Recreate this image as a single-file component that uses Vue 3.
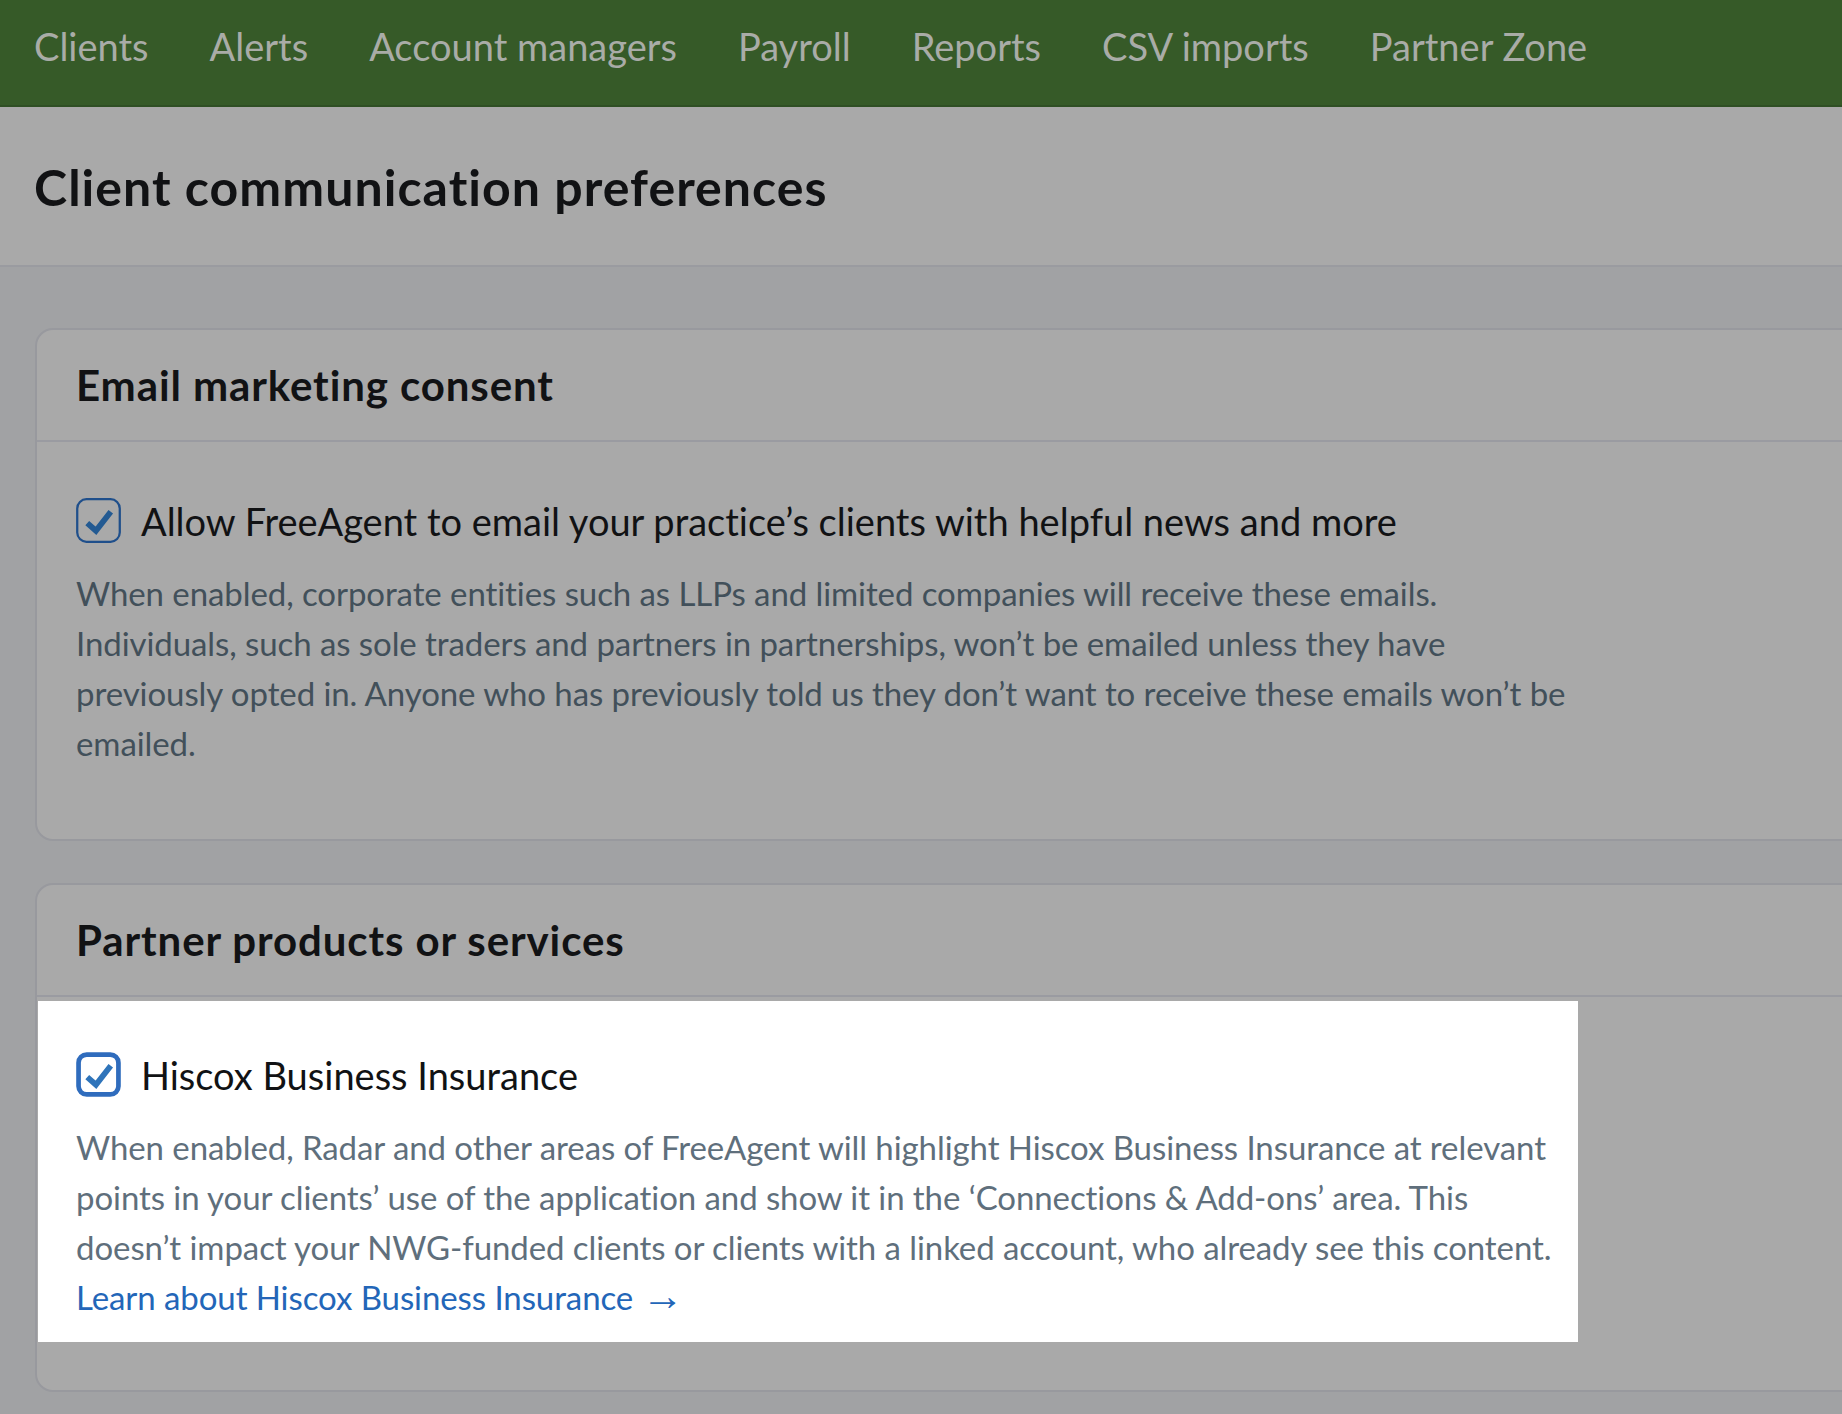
<template>
  <div class="page">
    <nav class="nav">
      <a v-for="item in navItems" :key="item" class="nav-item">{{ item }}</a>
    </nav>

    <header class="page-head">
      <h1 class="page-title">Client communication preferences</h1>
    </header>

    <main class="content">
      <section class="card card-email">
        <h2 class="card-title">Email marketing consent</h2>
        <div class="option">
          <label class="option-row">
            <svg class="checkbox" viewBox="0 0 44 44">
              <rect x="1.2" y="1.2" width="41.6" height="41.6" rx="9" fill="none" stroke="#1f4f8b" stroke-width="2.2" />
              <path d="M11 24.5 L19.5 32 L34 13.5" fill="none" stroke="#235a92" stroke-width="5.6" />
            </svg>
            <span class="option-label">Allow FreeAgent to email your practice’s clients with helpful news and more</span>
          </label>
          <p class="option-text">
            When enabled, corporate entities such as LLPs and limited companies will receive these emails.<br />
            Individuals, such as sole traders and partners in partnerships, won’t be emailed unless they have<br />
            previously opted in. Anyone who has previously told us they don’t want to receive these emails won’t be<br />
            emailed.
          </p>
        </div>
      </section>

      <section class="card card-partner">
        <h2 class="card-title">Partner products or services</h2>
        <div class="highlight">
          <label class="option-row">
            <svg class="checkbox" viewBox="0 0 44 44">
              <rect x="2.5" y="2.5" width="39" height="39" rx="8" fill="none" stroke="#2f6cbd" stroke-width="4.6" />
              <path d="M11 24.5 L19.5 32 L34 13.5" fill="none" stroke="#2f74ba" stroke-width="5.6" />
            </svg>
            <span class="option-label">Hiscox Business Insurance</span>
          </label>
          <p class="option-text">
            When enabled, Radar and other areas of FreeAgent will highlight Hiscox Business Insurance at relevant<br />
            points in your clients’ use of the application and show it in the ‘Connections &amp; Add-ons’ area. This<br />
            doesn’t impact your NWG-funded clients or clients with a linked account, who already see this content.<br />
            <a class="link">Learn about Hiscox Business Insurance <span class="arrow">→</span></a>
          </p>
        </div>
      </section>
    </main>
  </div>
</template>

<script setup>
const navItems = [
  "Clients",
  "Alerts",
  "Account managers",
  "Payroll",
  "Reports",
  "CSV imports",
  "Partner Zone",
];
</script>

<style>
html,
body {
  margin: 0;
  background: #a1a2a4;
  overflow: hidden;
}
</style>

<style scoped>
.page {
  font-family: "Lato", "Noto Sans", sans-serif;
  font-variant-ligatures: none;
  height: 1414px;
  overflow: hidden;
}
.nav {
  display: flex;
  gap: 61px;
  box-sizing: border-box;
  height: 107px;
  padding: 23px 34px 0;
  background: #365a28;
  border-bottom: 2px solid #2f4f24;
}
.nav-item {
  font-size: 38px;
  line-height: 46px;
  color: #a9aca7;
}
.page-head {
  box-sizing: border-box;
  height: 160px;
  padding: 51px 34px 0;
  background: #a9a9a9;
  border-bottom: 2px solid #9a9ba0;
}
.page-title {
  margin: 0;
  font-size: 50px;
  line-height: 58px;
  font-weight: 700;
  letter-spacing: 1.05px;
  color: #111214;
}
.content {
  padding: 61px 0 0 35px;
}
.card {
  box-sizing: border-box;
  width: 1860px;
  background: #a9a9a9;
  border: 2px solid #98999e;
  border-radius: 18px;
}
.card-email {
  height: 513px;
  margin-bottom: 42px;
}
.card-partner {
  height: 509px;
}
.card-title {
  box-sizing: border-box;
  height: 112px;
  margin: 0;
  padding: 30px 0 0 39px;
  font-size: 42px;
  line-height: 50px;
  font-weight: 700;
  letter-spacing: 0.9px;
  color: #111214;
  border-bottom: 2px solid #9a9ba1;
}
.option {
  padding: 56px 0 0 39px;
}
.highlight {
  box-sizing: border-box;
  width: 1540px;
  height: 341px;
  margin: 4px 0 0 1px;
  padding: 51px 0 0 38px;
  background: #fff;
}
.option-row {
  display: flex;
  align-items: center;
  gap: 20px;
  height: 45px;
}
.checkbox {
  flex: none;
  width: 45px;
  height: 45px;
}
.option-label {
  font-size: 38px;
  line-height: 46px;
  color: #111214;
}
.option-text {
  margin: 25px 0 0;
  font-size: 33px;
  line-height: 50px;
  letter-spacing: -0.08px;
  color: #42505a;
  white-space: nowrap;
}
.highlight .option-text {
  color: #5f6f7c;
}
.link {
  color: #2366b8;
}
.arrow {
  font-family: "Liberation Sans", sans-serif;
  font-size: 42px;
  line-height: 0;
}
</style>
